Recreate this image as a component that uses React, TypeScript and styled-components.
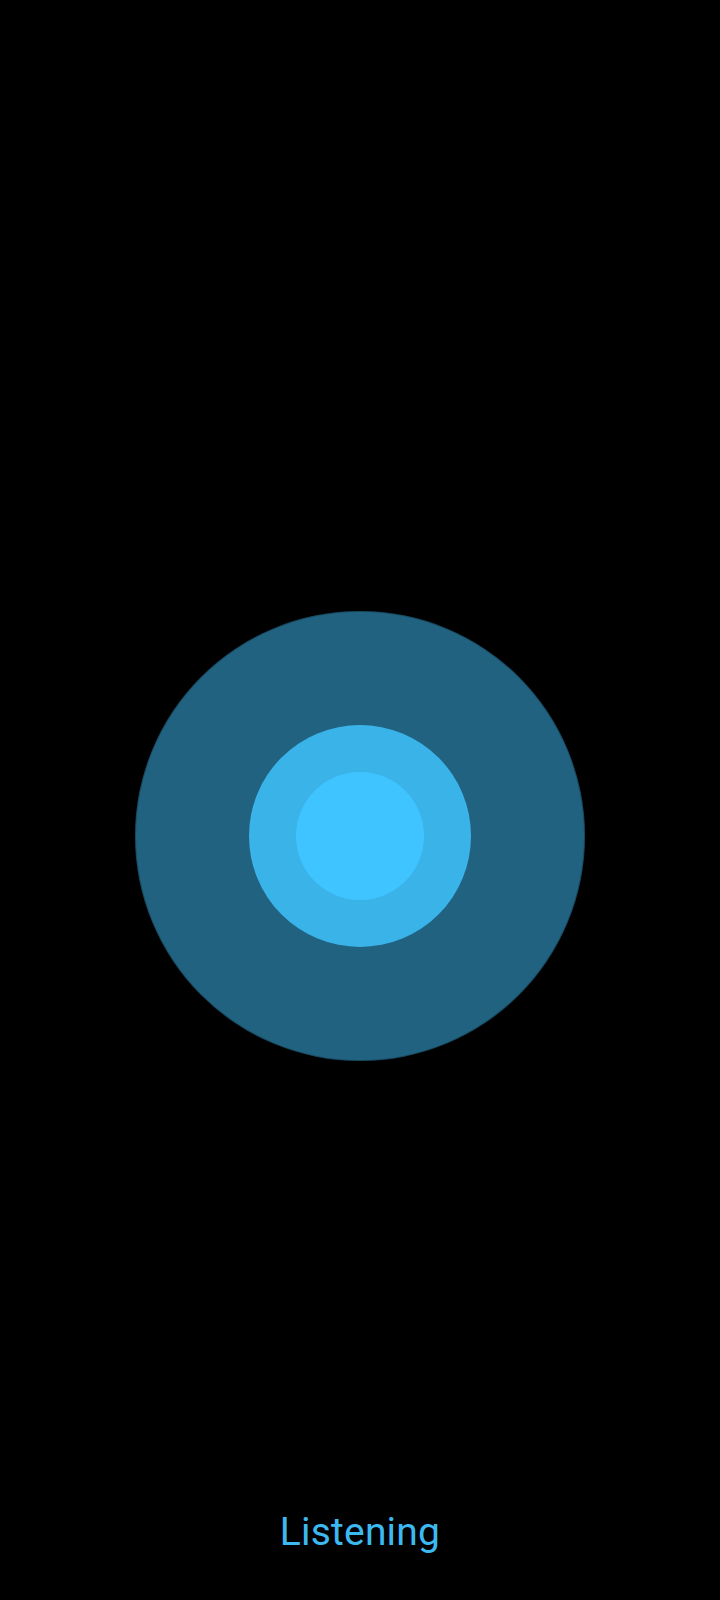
import styled, { createGlobalStyle } from "styled-components";

const GlobalStyle = createGlobalStyle`
  html, body {
    margin: 0;
    padding: 0;
    background: #000;
  }
  body {
    font-family: Roboto, "Noto Sans", "Liberation Sans", sans-serif;
  }
`;

export default function App() {
  return (
    <>
      <GlobalStyle />
      <Screen>
        <Stage>
          <Ring $size={450} $color="#206280" $edge>
            <Ring $size={222} $color="#3ab3e9">
              <Ring $size={128} $color="#40c4ff" />
            </Ring>
          </Ring>
        </Stage>
        <Status>Listening</Status>
      </Screen>
    </>
  );
}

const Screen = styled.div`
  width: 720px;
  height: 1600px;
  background: #000;
  display: flex;
  flex-direction: column;
  align-items: center;
  box-sizing: border-box;
  padding-top: 611px;
`;

const Stage = styled.div`
  display: flex;
  justify-content: center;
  width: 100%;
`;

const Ring = styled.div<{ $size: number; $color: string; $edge?: boolean }>`
  width: ${(p) => p.$size}px;
  height: ${(p) => p.$size}px;
  border-radius: 50%;
  background: ${(p) => p.$color};
  display: flex;
  align-items: center;
  justify-content: center;
  flex-shrink: 0;
  box-shadow: ${(p) => (p.$edge ? "inset 0 0 0 1px rgba(0, 0, 0, 0.25)" : "none")};
`;

const Status = styled.div`
  margin-top: 448px;
  color: #3db9f2;
  font-size: 39px;
  line-height: 46px;
  letter-spacing: 0.2px;
`;
